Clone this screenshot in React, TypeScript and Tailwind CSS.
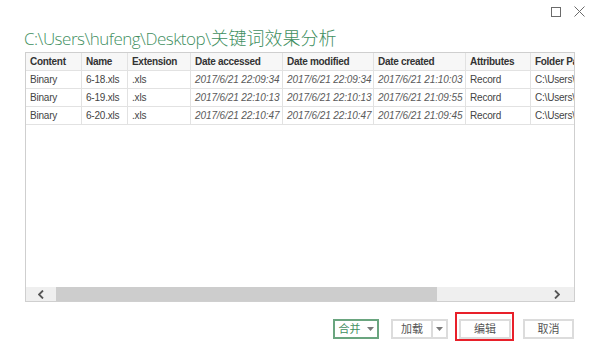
const columns = [
  { label: "Content", width: 56 },
  { label: "Name", width: 46 },
  { label: "Extension", width: 63 },
  { label: "Date accessed", width: 92 },
  { label: "Date modified", width: 91 },
  { label: "Date created", width: 92 },
  { label: "Attributes", width: 65 },
  { label: "Folder Path", width: 60 },
];

const rows = [
  ["Binary", "6-18.xls", ".xls", "2017/6/21 22:09:34", "2017/6/21 22:09:34", "2017/6/21 21:10:03", "Record", "C:\\Users\\hufeng"],
  ["Binary", "6-19.xls", ".xls", "2017/6/21 22:10:13", "2017/6/21 22:10:13", "2017/6/21 21:09:55", "Record", "C:\\Users\\hufeng"],
  ["Binary", "6-20.xls", ".xls", "2017/6/21 22:10:47", "2017/6/21 22:10:47", "2017/6/21 21:09:45", "Record", "C:\\Users\\hufeng"],
];

const font = { fontFamily: '"Liberation Sans", "Noto Sans CJK SC", sans-serif' };
const titleFont = { fontFamily: '"Open Sans", "Noto Sans CJK SC", sans-serif' };
const cjkFont = { fontFamily: '"Noto Sans CJK SC", sans-serif' };

function Caret() {
  return (
    <svg width="7" height="4" viewBox="0 0 7 4" className="shrink-0">
      <path d="M0 0h7L3.5 4z" fill="#7a7a7a" />
    </svg>
  );
}

export default function App() {
  return (
    <div className="w-[600px] h-[364px] bg-white overflow-hidden" style={font}>
      <div className="h-[22px] flex justify-end items-start pt-[6px] pr-[15px] gap-[13px]">
        <svg width="10" height="10" viewBox="0 0 10 10" className="mt-[1px]">
          <rect x="0.5" y="0.5" width="9" height="9" fill="none" stroke="#6b6b6b" strokeWidth="1" />
        </svg>
        <svg width="11" height="11" viewBox="0 0 11 11">
          <path d="M0.5 0.5L10.5 10.5M10.5 0.5L0.5 10.5" stroke="#6b6b6b" strokeWidth="1" />
        </svg>
      </div>

      <div className="ml-[24px] h-[30px] leading-[30px] text-[#3f8f5f] whitespace-nowrap" style={titleFont}>
        <span className="text-[17px] tracking-[-0.5px] font-light">C:\Users\hufeng\Desktop\</span>
        <span className="text-[18px] font-light" style={cjkFont}>关键词效果分析</span>
      </div>

      <div className="ml-[25px] w-[550px] h-[250px] border border-[#cfcfcf] flex flex-col">
        <div className="flex-1 overflow-hidden">
          <div className="flex h-[18px] bg-[#f7f7f7] border-b border-[#e2e2e2] whitespace-nowrap">
            {columns.map((c) => (
              <div
                key={c.label}
                className="shrink-0 border-r border-[#e2e2e2] pl-[4px] text-[10px] leading-[17px] font-bold text-[#333] tracking-[-0.3px] overflow-hidden"
                style={{ width: c.width }}
              >
                {c.label}
              </div>
            ))}
          </div>
          {rows.map((r, i) => (
            <div key={i} className="flex h-[18px] border-b border-[#e2e2e2] whitespace-nowrap">
              {r.map((v, j) => (
                <div
                  key={j}
                  className={`shrink-0 border-r border-[#e2e2e2] pl-[4px] text-[10px] leading-[17px] overflow-hidden ${
                    j >= 3 && j <= 5 ? "italic text-[#5a5a5a] tracking-[-0.1px]" : "text-[#444] tracking-[-0.2px]"
                  }`}
                  style={{ width: columns[j].width }}
                >
                  {v}
                </div>
              ))}
            </div>
          ))}
        </div>
        <div className="h-[14px] bg-[#efefef] flex items-center">
          <div className="w-[30px] flex justify-center">
            <svg width="6" height="9" viewBox="0 0 6 9">
              <path d="M5 0.5L1 4.5L5 8.5" fill="none" stroke="#555" strokeWidth="1.8" />
            </svg>
          </div>
          <div className="w-[381px] h-[14px] bg-[#cdcdcd]" />
          <div className="flex-1 flex justify-end pr-[14px]">
            <svg width="6" height="9" viewBox="0 0 6 9">
              <path d="M1 0.5L5 4.5L1 8.5" fill="none" stroke="#555" strokeWidth="1.8" />
            </svg>
          </div>
        </div>
      </div>

      <div className="mt-[10px] flex items-start justify-end pr-[26px] text-[11px] whitespace-nowrap">
        <div className="mt-[7px] w-[46px] h-[20px] border-2 border-[#6aa57f] flex items-center justify-center gap-[6px] text-[#3f8f5f]">
          <span>合并</span>
          <Caret />
        </div>
        <div className="ml-[12px] mt-[7px] w-[57px] h-[20px] border-2 border-[#dcdcdc] flex text-[#555]">
          <div className="w-[40px] flex items-center justify-center border-r-2 border-[#dcdcdc]">加载</div>
          <div className="flex-1 flex items-center justify-center">
            <Caret />
          </div>
        </div>
        <div className="ml-[7px] w-[59px] h-[29px] border-2 border-[#e8202a] pl-[2px] pr-[1px] pt-[5px]">
          <div className="h-[20px] border-2 border-[#dcdcdc] flex items-center justify-center text-[#555]">编辑</div>
        </div>
        <div className="ml-[9px] mt-[7px] w-[51px] h-[20px] border-2 border-[#dcdcdc] flex items-center justify-center text-[#555]">
          取消
        </div>
      </div>
    </div>
  );
}
